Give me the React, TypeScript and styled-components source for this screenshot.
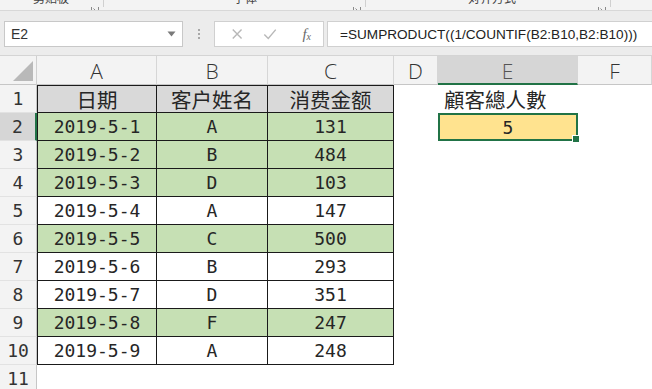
import React, { FC, ReactElement } from "react";
import styled, { createGlobalStyle } from "styled-components";

const GlobalStyle = createGlobalStyle`
  html, body {
    margin: 0;
    padding: 0;
    background: #ffffff;
    overflow: hidden;
  }
  body {
    font-family: "Liberation Sans", "Noto Sans CJK SC", sans-serif;
  }
`;

const COLS = ["A", "B", "C", "D", "E", "F"];

const rows: { date: string; name: string; amount: string; green: boolean }[] = [
  { date: "2019-5-1", name: "A", amount: "131", green: true },
  { date: "2019-5-2", name: "B", amount: "484", green: true },
  { date: "2019-5-3", name: "D", amount: "103", green: true },
  { date: "2019-5-4", name: "A", amount: "147", green: false },
  { date: "2019-5-5", name: "C", amount: "500", green: true },
  { date: "2019-5-6", name: "B", amount: "293", green: false },
  { date: "2019-5-7", name: "D", amount: "351", green: false },
  { date: "2019-5-8", name: "F", amount: "247", green: true },
  { date: "2019-5-9", name: "A", amount: "248", green: false },
];

const App: FC = (): ReactElement => {
  return (
    <Page>
      <GlobalStyle />
      <Ribbon>
        <RibbonGroup $width={110}>
          <RibbonLabel $left={33}>剪贴板</RibbonLabel>
          <Launcher />
        </RibbonGroup>
        <RibbonGroup $width={262}>
          <RibbonLabel $left={123}>字体</RibbonLabel>
          <Launcher />
        </RibbonGroup>
        <RibbonGroup $width={245}>
          <RibbonLabel $left={96}>对齐方式</RibbonLabel>
          <Launcher />
        </RibbonGroup>
      </Ribbon>

      <FormulaBar>
        <NameBox>
          E2
          <svg width="9" height="6" viewBox="0 0 9 6">
            <path d="M0.5 0.5 L8.5 0.5 L4.5 5.5 Z" fill="#7a7a7a" />
          </svg>
        </NameBox>
        <Grip>
          <span />
          <span />
          <span />
        </Grip>
        <ButtonsBox>
          <svg width="14" height="14" viewBox="0 0 14 14">
            <path d="M2 2 L12 12 M12 2 L2 12" stroke="#b8b8b8" strokeWidth="1.6" />
          </svg>
          <svg width="16" height="14" viewBox="0 0 16 14">
            <path d="M1.5 7.5 L6 12 L14.5 2" stroke="#b8b8b8" strokeWidth="1.6" fill="none" />
          </svg>
          <Fx>
            f<sub>x</sub>
          </Fx>
        </ButtonsBox>
        <FormulaInput>=SUMPRODUCT((1/COUNTIF(B2:B10,B2:B10)))</FormulaInput>
      </FormulaBar>

      <Sheet>
        <Corner>
          <svg width="20" height="20" viewBox="0 0 20 20">
            <path d="M20 0 L20 20 L0 20 Z" fill="#b9b9b9" />
          </svg>
        </Corner>
        {COLS.map((c) => (
          <ColHeader key={c} $active={c === "E"}>
            {c}
          </ColHeader>
        ))}

        <RowHeader $active={false}>1</RowHeader>
        <Cell $fill="#d9d9d9" $boxed $top $left $head>
          日期
        </Cell>
        <Cell $fill="#d9d9d9" $boxed $top $head>
          客户姓名
        </Cell>
        <Cell $fill="#d9d9d9" $boxed $top $head>
          消费金额
        </Cell>
        <Cell />
        <Cell $head $align="left">
          顧客總人數
        </Cell>
        <Cell />

        {rows.map((r, i) => {
          const fill = r.green ? "#c6e0b4" : "#ffffff";
          return (
            <React.Fragment key={r.date}>
              <RowHeader $active={i === 0}>{i + 2}</RowHeader>
              <Cell $fill={fill} $boxed $left>
                {r.date}
              </Cell>
              <Cell $fill={fill} $boxed>
                {r.name}
              </Cell>
              <Cell $fill={fill} $boxed>
                {r.amount}
              </Cell>
              <Cell />
              {i === 0 ? (
                <Selected>
                  5
                  <FillHandle />
                </Selected>
              ) : (
                <Cell />
              )}
              <Cell />
            </React.Fragment>
          );
        })}

        <RowHeader $active={false}>11</RowHeader>
        <Cell />
        <Cell />
        <Cell />
        <Cell />
        <Cell />
        <Cell />
      </Sheet>
    </Page>
  );
};

export default App;

const Launcher: FC = () => (
  <LauncherBox>
    <svg width="8" height="6" viewBox="0 0 8 6">
      <path d="M0.5 0 L0.5 5.5 L7.5 5.5 L7.5 0" stroke="#8a8a8a" fill="none" />
      <path d="M2.5 1.5 L5 4" stroke="#8a8a8a" />
    </svg>
  </LauncherBox>
);

const Page = styled.div`
  width: 652px;
  height: 389px;
  overflow: hidden;
  display: flex;
  flex-direction: column;
  background: #ffffff;
`;

const Ribbon = styled.div`
  height: 10px;
  flex: none;
  display: flex;
  background: #f3f3f3;
  border-bottom: 1px solid #d8d8d8;
  overflow: hidden;
`;

const RibbonGroup = styled.div<{ $width: number }>`
  position: relative;
  width: ${(p) => p.$width}px;
  flex: none;
  display: flex;
  justify-content: flex-end;
  padding-right: 6px;
  box-sizing: border-box;
`;

const RibbonLabel = styled.span<{ $left: number }>`
  position: absolute;
  left: ${(p) => p.$left}px;
  top: -10px;
  font-family: "Noto Sans CJK SC", sans-serif;
  font-size: 12px;
  line-height: 16px;
  color: #444444;
  white-space: nowrap;
`;

const LauncherBox = styled.div`
  margin-top: -1px;
  border-right: 1px solid #d0d0d0;
  padding-right: 4px;
  height: 8px;
`;

const FormulaBar = styled.div`
  height: 44px;
  flex: none;
  box-sizing: border-box;
  padding: 10px 0 8px 4px;
  display: flex;
  align-items: stretch;
  background: #ececec;
`;

const NameBox = styled.div`
  width: 179px;
  box-sizing: border-box;
  background: #ffffff;
  border: 1px solid #c8c8c8;
  display: flex;
  align-items: center;
  justify-content: space-between;
  padding: 0 6px 0 6px;
  font-family: "Liberation Sans", sans-serif;
  font-size: 14px;
  color: #333333;
`;

const Grip = styled.div`
  width: 31px;
  display: flex;
  flex-direction: column;
  align-items: center;
  justify-content: center;
  gap: 2px;

  span {
    width: 2px;
    height: 2px;
    background: #a8a8a8;
  }
`;

const ButtonsBox = styled.div`
  width: 110px;
  box-sizing: border-box;
  background: #ffffff;
  border: 1px solid #d0d0d0;
  display: flex;
  align-items: center;
  padding: 0 12px 0 16px;
  gap: 20px;
`;

const Fx = styled.span`
  font-family: "Liberation Serif", serif;
  font-style: italic;
  font-size: 15px;
  color: #6a6a6a;
  margin-left: 5px;

  sub {
    font-size: 10px;
    vertical-align: -1px;
  }
`;

const FormulaInput = styled.div`
  flex: 1;
  margin-left: 3px;
  background: #ffffff;
  border: 1px solid #d0d0d0;
  border-right: none;
  display: flex;
  align-items: center;
  padding-left: 12px;
  font-family: "Liberation Sans", sans-serif;
  font-size: 13.6px;
  color: #222222;
  white-space: nowrap;
`;

const Sheet = styled.div`
  flex: 1;
  display: grid;
  grid-template-columns: 37px 120px 111px 126px 44px 140px 1fr;
  grid-template-rows: 29px repeat(11, 28px);
  background: #ffffff;
  border-top: 1px solid #d4d4d4;
`;

const Corner = styled.div`
  background: #f3f3f3;
  border-right: 1px solid #d0d0d0;
  border-bottom: 1px solid #c6c6c6;
  display: flex;
  align-items: flex-end;
  justify-content: flex-end;
  padding: 0 3px 3px 0;
  box-sizing: border-box;
`;

const ColHeader = styled.div<{ $active: boolean }>`
  box-sizing: border-box;
  background: ${(p) => (p.$active ? "#d6d6d6" : "#f3f3f3")};
  border-right: 1px solid #d6d6d6;
  border-bottom: ${(p) => (p.$active ? "2px solid #217346" : "1px solid #c6c6c6")};
  display: flex;
  align-items: center;
  justify-content: center;
  font-family: "Open Sans", "Liberation Sans", sans-serif;
  font-weight: 300;
  font-size: 21px;
  color: ${(p) => (p.$active ? "#555555" : "#333333")};
  padding-top: 2px;
`;

const RowHeader = styled.div<{ $active: boolean }>`
  box-sizing: border-box;
  background: ${(p) => (p.$active ? "#d6d6d6" : "#f3f3f3")};
  border-right: ${(p) => (p.$active ? "2px solid #217346" : "1px solid #c6c6c6")};
  border-bottom: 1px solid #e2e2e2;
  display: flex;
  align-items: center;
  justify-content: center;
  font-family: "DejaVu Sans Mono", monospace;
  font-size: 18px;
  color: #333333;
`;

const Cell = styled.div<{
  $fill?: string;
  $boxed?: boolean;
  $top?: boolean;
  $left?: boolean;
  $head?: boolean;
  $align?: "left" | "center";
}>`
  box-sizing: border-box;
  background: ${(p) => p.$fill ?? "#ffffff"};
  border-right: ${(p) => (p.$boxed ? "1px solid #1a1a1a" : "none")};
  border-bottom: ${(p) => (p.$boxed ? "1px solid #1a1a1a" : "none")};
  border-top: ${(p) => (p.$top ? "1px solid #1a1a1a" : "none")};
  border-left: ${(p) => (p.$left ? "1px solid #1a1a1a" : "none")};
  display: flex;
  align-items: center;
  justify-content: ${(p) => (p.$align === "left" ? "flex-start" : "center")};
  padding-left: ${(p) => (p.$align === "left" ? "6px" : "0")};
  font-family: ${(p) =>
    p.$head ? `"Noto Sans CJK SC", "Noto Sans CJK TC", sans-serif` : `"DejaVu Sans Mono", monospace`};
  font-size: ${(p) => (p.$head ? "20.5px" : "18px")};
  color: #262626;
  white-space: nowrap;
`;

const Selected = styled.div`
  position: relative;
  box-sizing: border-box;
  background: #ffe38f;
  border: 2px solid #217346;
  display: flex;
  align-items: center;
  justify-content: center;
  font-family: "DejaVu Sans Mono", monospace;
  font-size: 18px;
  color: #262626;
`;

const FillHandle = styled.span`
  position: absolute;
  right: -4px;
  bottom: -4px;
  width: 6px;
  height: 6px;
  background: #217346;
  border: 1px solid #ffffff;
`;
